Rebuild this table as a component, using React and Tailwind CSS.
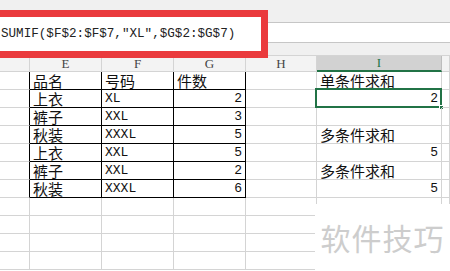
const cols = [
  { key: "D", w: "w-[30px]", label: "" },
  { key: "E", w: "w-[72px]", label: "E" },
  { key: "F", w: "w-[72px]", label: "F" },
  { key: "G", w: "w-[72px]", label: "G" },
  { key: "H", w: "w-[71px]", label: "H" },
  { key: "I", w: "w-[125px]", label: "I" },
  { key: "J", w: "flex-1", label: "" },
];

const rows = [
  ["品名", "号码", "件数", "单条件求和"],
  ["上衣", "XL", "2", "2"],
  ["裤子", "XXL", "3", ""],
  ["秋装", "XXXL", "5", "多条件求和"],
  ["上衣", "XXL", "5", "5"],
  ["裤子", "XXL", "2", "多条件求和"],
  ["秋装", "XXXL", "6", "5"],
];

const cjk = "font-['Noto_Sans_CJK_SC',sans-serif] text-[15px]";
const mono = "font-['Liberation_Mono','Noto_Sans_CJK_SC',monospace] text-[13px]";

function isAscii(s) {
  return /^[\x00-\x7f]*$/.test(s);
}

function Cell({ w, border, align, children, selected }) {
  return (
    <div
      className={`relative h-full shrink-0 flex items-end pb-[1px] px-[3px] border-r border-b ${w} ${border} ${
        align === "right" ? "justify-end" : "justify-start"
      }`}
    >
      {children && (
        <span className={`leading-[15px] text-[#111] ${isAscii(children) ? mono : cjk}`}>
          {children}
        </span>
      )}
      {selected && (
        <div className="absolute -left-[2px] -top-[2px] -right-[1px] -bottom-[1px] border-2 border-[#217346]">
          <div className="absolute -right-[4px] -bottom-[4px] w-[5px] h-[5px] bg-[#217346] border border-white" />
        </div>
      )}
    </div>
  );
}

function DataRow({ r, i }) {
  const black = "border-r-black border-b-black";
  const grey = "border-[#d4d4d4]";
  const iText = r[3];
  const iRight = isAscii(iText);
  return (
    <div className="flex h-[18px]">
      <Cell w="w-[30px]" border={`${grey} border-r-black`} />
      <Cell w="w-[72px]" border={black}>{r[0]}</Cell>
      <Cell w="w-[72px]" border={black}>{r[1]}</Cell>
      <Cell w="w-[72px]" border={black} align={i === 0 ? "left" : "right"}>
        {r[2]}
      </Cell>
      <Cell w="w-[71px]" border={grey} />
      <Cell w="w-[125px]" border={grey} align={iRight ? "right" : "left"} selected={i === 1}>
        {iText}
      </Cell>
      <Cell w="flex-1" border={grey} />
    </div>
  );
}

function EmptyRow() {
  return (
    <div className="flex h-[18px]">
      {cols.map((c) => (
        <Cell key={c.key} w={c.w} border="border-[#d4d4d4]" />
      ))}
    </div>
  );
}

export default function App() {
  return (
    <div className="relative w-[450px] h-[271px] overflow-hidden bg-white">
      {/* toolbar / formula bar */}
      <div className="h-[22px] bg-[#f0f0f0]" />
      <div className="h-[21px] bg-white border-y border-[#c6c6c6]" />
      <div className="h-[12px] bg-[#f0f0f0]" />

      {/* column headers */}
      <div className="flex h-[17px] bg-[#f3f3f3] border-t border-[#d4d4d4]">
        {cols.map((c) => (
          <div
            key={c.key}
            className={`shrink-0 h-full flex items-center justify-center border-r ${c.w} font-['Liberation_Serif',serif] text-[13px] ${
              c.key === "I"
                ? "bg-[#d2d2d2] text-[#217346] border-b-2 border-r-[#bdbdbd] border-b-[#217346]"
                : "text-[#444] border-b border-[#d4d4d4]"
            }`}
          >
            {c.label}
          </div>
        ))}
      </div>

      {rows.map((r, i) => (
        <DataRow key={i} r={r} i={i} />
      ))}
      <EmptyRow />
      <EmptyRow />
      <EmptyRow />
      <EmptyRow />

      {/* annotation box round the formula */}
      <div className="absolute -left-[8px] top-[10px] w-[276px] h-[48px] border-[7px] border-[#ea3a3d] bg-white flex items-center">
        <span className="pl-[2px] font-['Liberation_Mono',monospace] text-[12.6px] text-[#222] leading-none">
          SUMIF($F$2:$F$7,"XL",$G$2:$G$7)
        </span>
      </div>

      {/* watermark */}
      <div className="absolute left-[315px] top-[204px] w-[135px] h-[67px] bg-white flex items-center justify-center pb-[2px]">
        <span className="font-['Noto_Sans_CJK_SC',sans-serif] text-[30px] text-[#cdcdcd] leading-none tracking-[1px]">
          软件技巧
        </span>
      </div>
    </div>
  );
}
